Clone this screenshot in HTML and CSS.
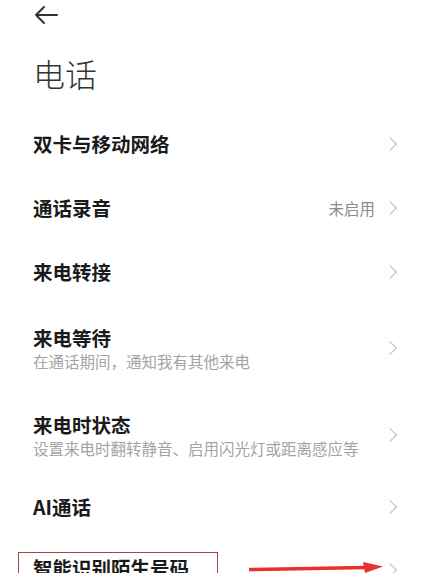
FILE: index.html
```html
<!DOCTYPE html>
<html lang="zh-CN">
<head>
    <meta charset="UTF-8">
    <meta name="viewport" content="width=device-width, initial-scale=1.0">
    <title>电话</title>
    <link rel="stylesheet" href="styles.css">
</head>
<body>

    <div class="page">
        <!-- 顶部返回 -->
        <div class="topbar">
            <svg class="back" width="26" height="20" viewBox="0 0 26 20">
                <path d="M24 10H3M11 2L3 10l8 8" fill="none" stroke="#333" stroke-width="2" stroke-linecap="round" stroke-linejoin="round"/>
            </svg>
        </div>

        <h1 class="title">电话</h1>

        <!-- 设置列表 -->
        <div class="list">
            <div class="row">
                <div class="text"><div class="name">双卡与移动网络</div></div>
                <span class="chev"></span>
            </div>
            <div class="row">
                <div class="text"><div class="name">通话录音</div></div>
                <span class="value">未启用</span>
                <span class="chev"></span>
            </div>
            <div class="row">
                <div class="text"><div class="name">来电转接</div></div>
                <span class="chev"></span>
            </div>
            <div class="row double">
                <div class="text">
                    <div class="name">来电等待</div>
                    <div class="sub">在通话期间，通知我有其他来电</div>
                </div>
                <span class="chev"></span>
            </div>
            <div class="row double">
                <div class="text">
                    <div class="name">来电时状态</div>
                    <div class="sub">设置来电时翻转静音、启用闪光灯或距离感应等</div>
                </div>
                <span class="chev"></span>
            </div>
            <div class="row ai">
                <div class="text"><div class="name">AI通话</div></div>
                <span class="chev"></span>
            </div>
            <div class="row double marked">
                <div class="text">
                    <div class="name boxed">智能识别陌生号码</div>
                </div>
                <svg class="pointer" width="136" height="14" viewBox="0 0 136 14">
                    <path d="M0 8.5L118 6.5" stroke="#e8302c" stroke-width="3.5"/>
                    <path d="M114 1L134 5.5L116 12Z" fill="#e8302c"/>
                </svg>
                <span class="chev"></span>
            </div>
        </div>
    </div>

</body>
</html>
```

FILE: styles.css
```css
/* Stile di base */
body {
    margin: 0;
    background-color: #fff;
    font-family: "Noto Sans CJK SC", "Noto Sans", sans-serif;
    color: #1a1a1a;
    overflow: hidden;
}

.page {
    padding: 0 28px 0 33px;
    height: 573px;
    overflow: hidden;
}

.topbar {
    height: 30px;
    display: flex;
    align-items: center;
}

.title {
    margin: 23px 0 0;
    font-size: 32px;
    font-weight: 300;
    color: #333;
    line-height: 40px;
    height: 59px;
}

.row {
    display: flex;
    align-items: center;
    height: 64px;
    position: relative;
}
.row.double {
    height: 87px;
}
.row.ai {
    height: 58px;
}
.text {
    flex: 1;
}
.name {
    font-size: 19.5px;
    font-weight: 700;
    line-height: 26px;
}
.sub {
    font-size: 15.5px;
    color: #a3a3a3;
    line-height: 20px;
}
.value {
    font-size: 15.5px;
    color: #8c8c8c;
    margin-right: 10px;
}
.chev {
    width: 9px;
    height: 9px;
    border-top: 1.5px solid #bdbdbd;
    border-right: 1.5px solid #bdbdbd;
    transform: rotate(45deg);
    margin-right: 5px;
}

.boxed {
    display: inline-block;
    margin-left: -15px;
    padding: 2px 14px 0 14px;
    width: 170px;
    border: 1.5px solid #9c4a40;
    border-bottom: none;
}
.marked .text {
    align-self: flex-start;
    padding-top: 16px;
}
.marked .chev {
    align-self: flex-start;
    margin-top: 29px;
}
.pointer {
    position: absolute;
    left: 216px;
    top: 25px;
}
```
